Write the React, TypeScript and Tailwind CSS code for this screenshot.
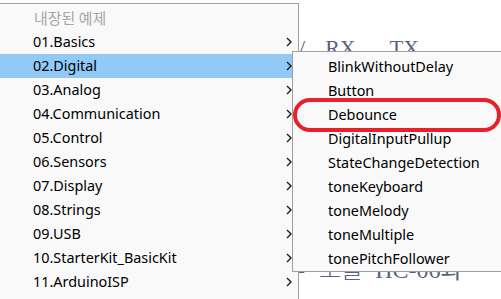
import React from 'react'

const mainItems = [
    '01.Basics',
    '02.Digital',
    '03.Analog',
    '04.Communication',
    '05.Control',
    '06.Sensors',
    '07.Display',
    '08.Strings',
    '09.USB',
    '10.StarterKit_BasicKit',
    '11.ArduinoISP',
]

const subItems = [
    'BlinkWithoutDelay',
    'Button',
    'Debounce',
    'DigitalInputPullup',
    'StateChangeDetection',
    'toneKeyboard',
    'toneMelody',
    'toneMultiple',
    'tonePitchFollower',
]

const Chevron = () => (
    <svg width="6" height="10" viewBox="0 0 6 10" className="block">
        <polyline points="1,1 5,5 1,9" fill="none" stroke="#1a1a1a" strokeWidth="1.4" />
    </svg>
)

export default function App() {
    return (
        <div
            className="relative w-[501px] h-[299px] overflow-hidden bg-white"
            style={{ fontFamily: '"Noto Sans", "Noto Sans CJK KR", sans-serif' }}
        >
            {/* 뒤쪽 에디터 텍스트 */}
            <div className="absolute left-[0px] top-[0px] w-[501px] h-[299px] text-[#56627e] font-['Liberation_Serif','Noto_Sans_CJK_KR',serif]">
                <div className="flex items-baseline pl-[299px] pt-[35px] text-[22px] leading-[26px] whitespace-pre">
                    <span>/</span>
                    <span className="ml-[20px]">RX</span>
                    <span className="ml-[34px]">TX</span>
                </div>
                <div className="flex items-baseline pl-[297px] pt-[193px] text-[24px] leading-[28px] whitespace-pre">
                    <span>-</span>
                    <span className="ml-[14px] font-['Noto_Sans_CJK_KR',sans-serif] font-light">모듈</span>
                    <span className="ml-[12px]">HC-06과</span>
                </div>
            </div>

            {/* 메인 메뉴 */}
            <div className="absolute left-[-1px] top-[3px] w-[300px] h-[320px] bg-[#f9f9f9] border border-[#a0a0a0] pt-[2px]">
                <div className="h-[24px] leading-[24px] pl-[34px] text-[15px] text-[#a6a6a6] font-['Noto_Sans_CJK_KR',sans-serif]">
                    내장된 예제
                </div>
                {mainItems.map(name => (
                    <div
                        key={name}
                        className={`flex items-center h-[24px] pl-[33px] pr-[6px] text-[14.4px] text-[#000] ${name === '02.Digital' ? 'bg-[#91c9f7]' : ''}`}
                    >
                        <span className="flex-1">{name}</span>
                        <Chevron />
                    </div>
                ))}
            </div>

            {/* 서브 메뉴 */}
            <div className="absolute left-[292px] top-[51px] w-[230px] bg-[#f9f9f9] border border-[#a0a0a0] pt-[3px]">
                {subItems.map(name => (
                    <div key={name} className="h-[24px] leading-[24px] pl-[35px] text-[14.4px] text-[#000]">
                        {name}
                    </div>
                ))}
            </div>

            {/* 빨간 표시 */}
            <div className="absolute left-[293px] top-[98px] w-[208px] h-[34px] rounded-full border-[4px] border-[#e8202c]" />
        </div>
    )
}
